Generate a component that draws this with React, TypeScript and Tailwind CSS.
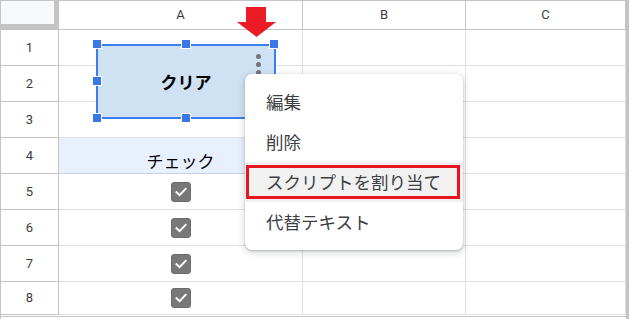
import React from "react";

const jp = { fontFamily: '"Noto Sans CJK JP", "Noto Sans", sans-serif' };
const num = { fontFamily: 'Roboto, "Liberation Sans", Arial, sans-serif' };

const rows = [1, 2, 3, 4, 5, 6, 7, 8];

function CheckBox() {
  return (
    <div className="w-[20px] h-[20px] rounded-[3px] bg-[#787878] border border-[#6b6b6b] flex items-center justify-center">
      <svg width="14" height="14" viewBox="0 0 14 14">
        <path d="M2.5 7.2 L5.6 10.2 L11.6 3.9" fill="none" stroke="#fff" strokeWidth="2" strokeLinecap="square" />
      </svg>
    </div>
  );
}

function Row({ n }: { n: number }) {
  const h = n === 8 ? "h-[33px]" : "h-[36px]";
  const isHeader = n === 4;
  const hasCheck = n >= 5;
  return (
    <div className={`flex ${h}`}>
      <div
        className="w-[58px] shrink-0 border-r border-b border-[#c4c4c4] flex items-center justify-center text-[13px] text-[#3c3c3c]"
        style={num}
      >
        {n}
      </div>
      <div
        className={`w-[244px] shrink-0 border-r border-b flex justify-center ${
          isHeader ? "bg-[#e8f0fe] border-[#c6d3e6] items-end" : "border-[#e0e0e0] items-center"
        }`}
      >
        {isHeader && (
          <span className="text-[17px] leading-[24px] text-black" style={jp}>
            チェック
          </span>
        )}
        {hasCheck && <CheckBox />}
      </div>
      <div className="w-[163px] shrink-0 border-r border-b border-[#e0e0e0]" />
      <div className="w-[160px] shrink-0 border-r border-b border-[#e0e0e0]" />
    </div>
  );
}

function Handle({ x, y }: { x: number; y: number }) {
  return (
    <div
      className="absolute w-[10px] h-[10px] bg-[#3b78e7] border border-white"
      style={{ left: x - 5, top: y - 5 }}
    />
  );
}

const menuItems = ["編集", "削除", "スクリプトを割り当て", "代替テキスト"];

export default function App() {
  return (
    <div className="relative w-[629px] h-[319px] bg-white overflow-hidden">
      <div className="border-t border-l border-r-[3px] border-[#c4c4c4] h-[319px]">
        {/* column header */}
        <div className="flex h-[29px]">
          <div className="w-[58px] shrink-0 bg-[#f8f9fa] border-r-[5px] border-b-[6px] border-[#c4c4c4]" />
          {[
            ["A", "w-[244px]"],
            ["B", "w-[163px]"],
            ["C", "w-[160px]"],
          ].map(([l, w]) => (
            <div
              key={l}
              className={`${w} shrink-0 border-r border-b border-[#c4c4c4] flex items-center justify-center text-[13px] text-[#3c3c3c]`}
              style={num}
            >
              {l}
            </div>
          ))}
        </div>
        {rows.map((n) => (
          <Row key={n} n={n} />
        ))}
        <div className="h-[2px] border-b border-[#c4c4c4]" />
      </div>

      {/* red arrow */}
      <svg className="absolute left-[237px] top-[7px]" width="39" height="30" viewBox="0 0 39 30">
        <polygon points="9,0 29,0 29,15 39,15 19.5,30 0,15 9,15" fill="#ec1c24" />
      </svg>

      {/* drawing button */}
      <div className="absolute left-[96px] top-[44px] w-[180px] h-[75px] border-2 border-[#3b7ded] bg-[#cfe2f3] flex items-center justify-center">
        <span className="text-[17px] font-bold text-black" style={jp}>
          クリア
        </span>
        <div className="absolute left-[158px] top-[8px] flex flex-col gap-[3px]">
          <span className="w-[5px] h-[5px] rounded-full bg-[#70757a]" />
          <span className="w-[5px] h-[5px] rounded-full bg-[#70757a]" />
          <span className="w-[5px] h-[5px] rounded-full bg-[#70757a]" />
        </div>
      </div>
      <Handle x={97} y={44} />
      <Handle x={186} y={44} />
      <Handle x={274} y={44} />
      <Handle x={97} y={81} />
      <Handle x={97} y={118} />
      <Handle x={186} y={118} />
      <Handle x={274} y={118} />

      {/* context menu */}
      <div className="absolute left-[245px] top-[74px] w-[218px] py-[8px] bg-white rounded-[7px] shadow-[0_2px_6px_2px_rgba(60,64,67,0.15),0_1px_2px_rgba(60,64,67,0.3)]">
        {menuItems.map((t, i) => (
          <div
            key={t}
            className={`relative h-[40px] flex items-center pl-[21px] text-[17.5px] text-[#3c4043] ${
              i === 2 ? "bg-[#f1f1f1]" : ""
            }`}
            style={jp}
          >
            {t}
            {i === 2 && (
              <div className="absolute left-[1px] top-[3px] w-[214px] h-[34px] border-[3px] border-[#e8141f]" />
            )}
          </div>
        ))}
      </div>
    </div>
  );
}
